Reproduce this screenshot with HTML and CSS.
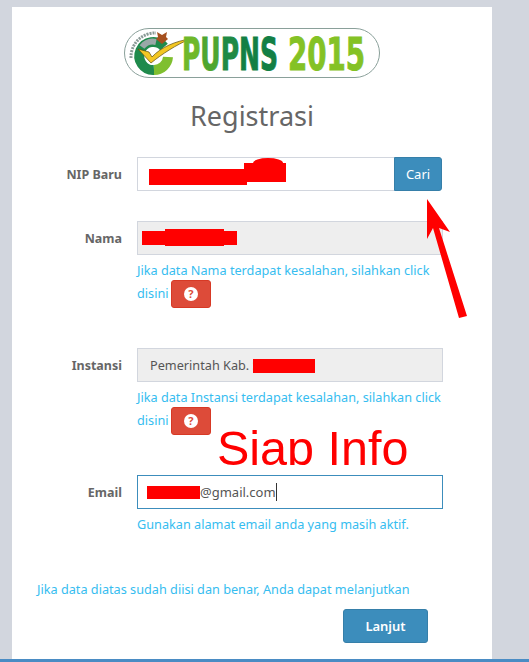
FILE: index.html
```html
<!DOCTYPE html>
<html lang="en">
<head>
<meta charset="UTF-8">
<meta name="viewport" content="width=device-width, initial-scale=1.0">
<title>Registrasi PUPNS 2015</title>
<link rel="stylesheet" href="styles.css">
</head>
<body>
  <div class="card">
    <div class="logo-row">
      <svg class="logo" width="256" height="50" viewBox="0 0 256 50">
        <rect x="0.5" y="0.5" width="255" height="49" rx="24.5" fill="#fff" stroke="#8aa09a"/>
        <path d="M7 30A24 24 0 0 1 32 5" fill="none" stroke="#8a9a96" stroke-width="3" stroke-dasharray="2 1"/>
        <path d="M40 19A14 14 0 1 0 30 42" fill="none" stroke="#1f8a4c" stroke-width="10"/>
        <path d="M18 19A14 14 0 0 1 32 14" fill="none" stroke="#9aa8a8" stroke-width="6"/>
        <path d="M30 42A14 14 0 0 0 44 29" fill="none" stroke="#7fbf2f" stroke-width="10"/>
        <path d="M14 21l11 3 3 5C37 19 52 13 66 11 52 17 38 26 27 35z" fill="#f3c623" stroke="#5c4c10" stroke-width=".7"/>
        <path d="M33 4l5 3 5-3-1 5 2 2-6 5-6-5 2-2z" fill="#a5501f"/>
        <text class="logo-text" y="42" x="58" textLength="96" lengthAdjust="spacingAndGlyphs"><tspan class="c1">P</tspan><tspan class="c2">U</tspan><tspan class="c3">P</tspan><tspan class="c4">N</tspan><tspan class="c4">S</tspan></text>
        <text class="logo-text logo-year" x="164" y="42" textLength="77" lengthAdjust="spacingAndGlyphs">2015</text>
      </svg>
    </div>
    <h1>Registrasi</h1>

    <div class="form-row first">
      <label>NIP Baru</label>
      <div class="control">
        <div class="input-group">
          <div class="field">
            <span class="scribble s1"></span><span class="scribble s2"></span><span class="scribble s3"></span>
          </div>
          <button class="btn btn-cari">Cari</button>
        </div>
      </div>
    </div>

    <div class="form-row nama">
      <label>Nama</label>
      <div class="control">
        <div class="field readonly">
          <span class="scribble s4"></span><span class="scribble s5"></span>
        </div>
        <p class="help">Jika data Nama terdapat kesalahan, silahkan click disini
          <a class="btn-help"><span class="q">?</span></a></p>
      </div>
    </div>

    <div class="form-row instansi">
      <label>Instansi</label>
      <div class="control">
        <div class="field readonly">Pemerintah Kab. S<span class="scribble s6"></span></div>
        <p class="help">Jika data Instansi terdapat kesalahan, silahkan click disini
          <a class="btn-help"><span class="q">?</span></a></p>
      </div>
    </div>

    <div class="form-row email">
      <label>Email</label>
      <div class="control">
        <div class="field focus"><span class="scribble-inline"></span>@gmail.com<span class="caret"></span></div>
        <p class="help">Gunakan alamat email anda yang masih aktif.</p>
      </div>
    </div>

    <p class="help next-note">Jika data diatas sudah diisi dan benar, Anda dapat melanjutkan</p>
    <div class="actions"><button class="btn btn-lanjut">Lanjut</button></div>

    <div class="stamp">Siap Info</div>
    <svg class="arrow" width="50" height="130" viewBox="0 0 50 130">
      <path d="M3 2L26 35 15 31 43 119 35 121 9 31 3 42z" fill="#ff0000"/>
    </svg>
  </div>
  <div class="bottom-bar"></div>
</body>
</html>
```

FILE: styles.css
```css
* { margin:0; padding:0; box-sizing:border-box; }
html, body { height:100%; overflow:hidden; }
body { font-family:"Noto Sans", "Open Sans", Arial, sans-serif; background:#d2d6de; color:#555; font-size:13px; padding:7px 37px 0 12px; position:relative; }
.card { background:#fff; width:480px; height:652px; padding-top:21px; position:relative; }
.logo-row { display:flex; justify-content:center; }
.logo { display:block; }
.logo-text { font-family:"DejaVu Sans", sans-serif; font-weight:700; font-size:45px; stroke-width:1; }
.c1 { fill:#6fb82a; stroke:#6fb82a; }
.c2 { fill:#4ea62f; stroke:#4ea62f; }
.c3 { fill:#1f8a45; stroke:#1f8a45; }
.c4 { fill:#137f45; stroke:#137f45; }
.logo-year { fill:#84c225; stroke:#84c225; }
h1 { font-size:27px; font-weight:400; color:#666; text-align:center; line-height:38px; margin-top:19px; }

.form-row { display:flex; }
.form-row label { width:110px; height:34px; text-align:right; font-weight:700; font-size:12.5px; color:#666; line-height:36px; flex-shrink:0; }
.control { width:306px; margin-left:15px; }
.first { margin-top:22px; }
.nama { margin-top:30px; }
.instansi { margin-top:40px; }
.email { margin-top:40px; }

.input-group { display:flex; margin-right:1px; }
.input-group .field { flex:1; border-right:none; }
.field { height:34px; border:1px solid #d2d6de; background:#fff; padding:0 12px; line-height:32px; font-size:13px; color:#555; position:relative; }
.field.readonly { background:#eee; font-size:12.7px; }
.field.focus { border-color:#3c8dbc; display:flex; align-items:center; padding-left:9px; }
.scribble { position:absolute; background:#f00; display:block; }
.s1 { left:11px; top:11px; width:98px; height:16px; }
.s2 { left:106px; top:5px; width:42px; height:19px; }
.s3 { left:115px; top:0; width:30px; height:10px; border-radius:50% 50% 0 0; }
.s4 { left:4px; top:9px; width:95px; height:14px; }
.s5 { left:27px; top:7px; width:59px; height:17px; }
.s6 { left:115px; top:10px; width:62px; height:14px; }
.scribble-inline { display:inline-block; width:53px; height:13px; background:#f00; }
.caret { display:inline-block; width:1px; height:18px; background:#333; }

.btn { background:#3c8dbc; border:1px solid #367fa9; color:#fff; font-family:inherit; font-size:13px; }
.btn-cari { width:48px; height:34px; border-radius:0 3px 3px 0; flex-shrink:0; }
.btn-lanjut { width:85px; height:34px; border-radius:3px; font-weight:600; }

.help { color:#36bdf0; font-size:12.7px; line-height:22px; margin-top:4px; }
.btn-help { display:inline-flex; align-items:center; justify-content:center; width:40px; height:28px; background:#dd4b39; border:1px solid #d73925; border-radius:3px; vertical-align:middle; margin-top:-1px; margin-left:-1px; }
.q { width:14px; height:14px; border-radius:50%; background:#fff; color:#dd4b39; font-size:11px; font-weight:700; line-height:14px; text-align:center; display:block; }

.next-note { margin:43px 0 0 25px; }
.actions { display:flex; justify-content:flex-end; margin-top:9px; width:416px; }

.stamp { position:absolute; left:205px; top:414px; height:44px; overflow:hidden; font-family:"Liberation Sans", Arial, sans-serif; font-size:48.5px; line-height:54px; color:#f00; white-space:nowrap; }
.arrow { position:absolute; left:412px; top:190px; }
.bottom-bar { position:absolute; left:0; right:0; bottom:0; height:3px; background:#4a8cc4; }
```
